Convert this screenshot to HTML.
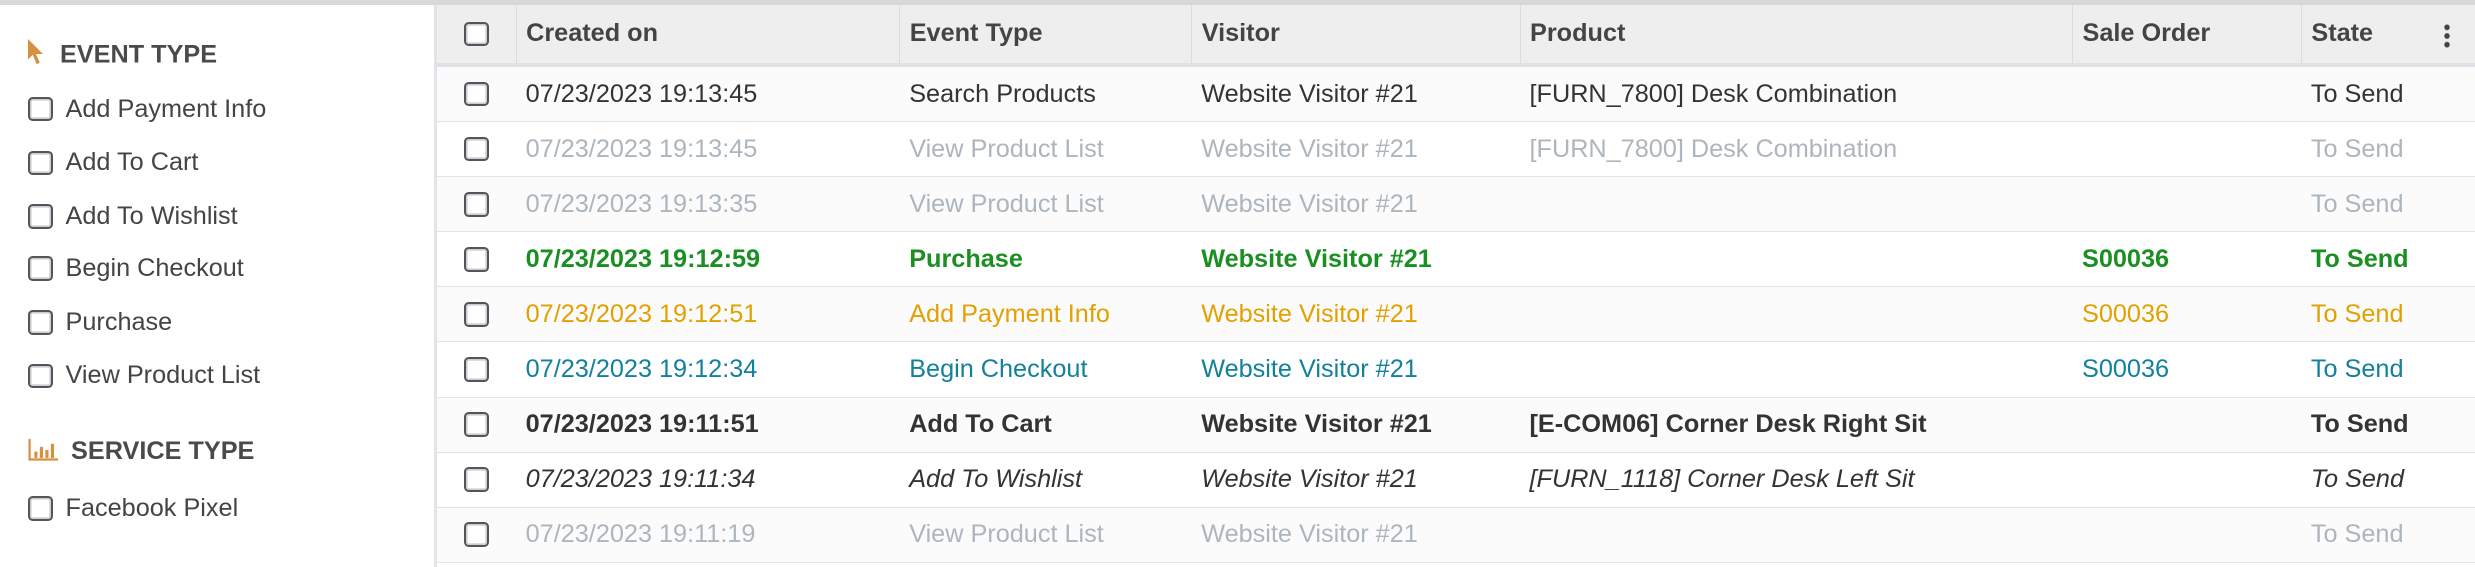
<!DOCTYPE html>
<html><head><meta charset="utf-8"><style>
html,body{margin:0;padding:0;background:#fff;overflow:hidden}
body{width:2475px;height:567px}
#w{zoom:1.5785;width:1568px;height:360px;position:relative;font-family:"Liberation Sans",sans-serif;font-size:16px;color:#333}
.top{position:absolute;left:0;top:0;width:1568px;height:3px;background:#d8d8d8}
.side{position:absolute;left:0;top:3px;width:275px;height:357px;border-right:2px solid #e2e4e7}
.h{position:absolute;left:18px;font-weight:bold;color:#4a4a4a;font-size:16px}
.it{position:absolute;left:18px;color:#444}
.cb{display:inline-block;width:13px;height:13px;border:1.6px solid #555;border-radius:3px;background:#fff;box-shadow:inset 0 0 0 1px #c7ced6;vertical-align:-3px}
.it .cb{margin-right:8px}
table{position:absolute;left:277px;top:3px;border-collapse:collapse;width:1291px;table-layout:fixed}
th,td{text-align:left;padding:0 0 0 6px;white-space:nowrap;overflow:hidden}
th{height:37px;background:#eee;font-weight:bold;color:#444;border-left:1px solid #dcdcdc;border-bottom:3px solid #dee2e6}
td{height:34.25px;border-bottom:1px solid #e2e4e7}
tbody tr:nth-child(odd){background:#fbfbfb}
.c0{text-align:center;padding:0}
.m td{color:#adb5bd}.g td{color:#1a8f22;font-weight:bold}.o td{color:#e2a100}.t td{color:#13819c}.b td{font-weight:bold}.i td{font-style:italic}
.dots{float:right;margin-right:16px;width:4px;height:16px;margin-top:2px;background:radial-gradient(circle,#444 1.6px,transparent 2px) 0 0/4px 5.5px repeat-y}
</style></head><body><div id="w">
<div class="top"></div>
<div class="side">
<div class="h" style="top:22px"><svg width="12" height="17" viewBox="0 0 12 17" style="vertical-align:-2px;margin-right:8px"><path d="M0 0 L0 13 L3 10 L5.5 16 L7.5 15 L5 9.5 L9.5 9.5 Z" fill="#d8903f"/></svg>EVENT TYPE</div>
<div class="it" style="top:57px"><span class="cb"></span>Add Payment Info</div>
<div class="it" style="top:91px"><span class="cb"></span>Add To Cart</div>
<div class="it" style="top:125px"><span class="cb"></span>Add To Wishlist</div>
<div class="it" style="top:158px"><span class="cb"></span>Begin Checkout</div>
<div class="it" style="top:192px"><span class="cb"></span>Purchase</div>
<div class="it" style="top:226px"><span class="cb"></span>View Product List</div>
<div class="h" style="top:274px"><svg width="19" height="14" viewBox="0 0 19 14" style="vertical-align:-1px;margin-right:8px"><path d="M1 0V13H19" stroke="#d8903f" stroke-width="1.4" fill="none"/><rect x="4" y="8" width="2" height="4" fill="#d8903f"/><rect x="7.5" y="5" width="2" height="7" fill="#d8903f"/><rect x="11" y="7" width="2" height="5" fill="#d8903f"/><rect x="14.5" y="3" width="2" height="9" fill="#d8903f"/></svg>SERVICE TYPE</div>
<div class="it" style="top:310px"><span class="cb"></span>Facebook Pixel</div>
</div>
<table>
<colgroup><col style="width:50px"><col style="width:243px"><col style="width:185px"><col style="width:208px"><col style="width:350px"><col style="width:145px"><col style="width:110px"></colgroup>
<thead><tr><th class="c0" style="border-left:none"><span class="cb"></span></th><th>Created on</th><th>Event Type</th><th>Visitor</th><th>Product</th><th>Sale Order</th><th>State<span class="dots"></span></th></tr></thead>
<tbody>
<tr><td class="c0"><span class="cb"></span></td><td>07/23/2023 19:13:45</td><td>Search Products</td><td>Website Visitor #21</td><td>[FURN_7800] Desk Combination</td><td></td><td>To Send</td></tr>
<tr class="m"><td class="c0"><span class="cb"></span></td><td>07/23/2023 19:13:45</td><td>View Product List</td><td>Website Visitor #21</td><td>[FURN_7800] Desk Combination</td><td></td><td>To Send</td></tr>
<tr class="m"><td class="c0"><span class="cb"></span></td><td>07/23/2023 19:13:35</td><td>View Product List</td><td>Website Visitor #21</td><td></td><td></td><td>To Send</td></tr>
<tr class="g"><td class="c0"><span class="cb"></span></td><td>07/23/2023 19:12:59</td><td>Purchase</td><td>Website Visitor #21</td><td></td><td>S00036</td><td>To Send</td></tr>
<tr class="o"><td class="c0"><span class="cb"></span></td><td>07/23/2023 19:12:51</td><td>Add Payment Info</td><td>Website Visitor #21</td><td></td><td>S00036</td><td>To Send</td></tr>
<tr class="t"><td class="c0"><span class="cb"></span></td><td>07/23/2023 19:12:34</td><td>Begin Checkout</td><td>Website Visitor #21</td><td></td><td>S00036</td><td>To Send</td></tr>
<tr class="b"><td class="c0"><span class="cb"></span></td><td>07/23/2023 19:11:51</td><td>Add To Cart</td><td>Website Visitor #21</td><td>[E-COM06] Corner Desk Right Sit</td><td></td><td>To Send</td></tr>
<tr class="i"><td class="c0"><span class="cb"></span></td><td>07/23/2023 19:11:34</td><td>Add To Wishlist</td><td>Website Visitor #21</td><td>[FURN_1118] Corner Desk Left Sit</td><td></td><td>To Send</td></tr>
<tr class="m"><td class="c0"><span class="cb"></span></td><td>07/23/2023 19:11:19</td><td>View Product List</td><td>Website Visitor #21</td><td></td><td></td><td>To Send</td></tr>
</tbody></table>
</div></body></html>
